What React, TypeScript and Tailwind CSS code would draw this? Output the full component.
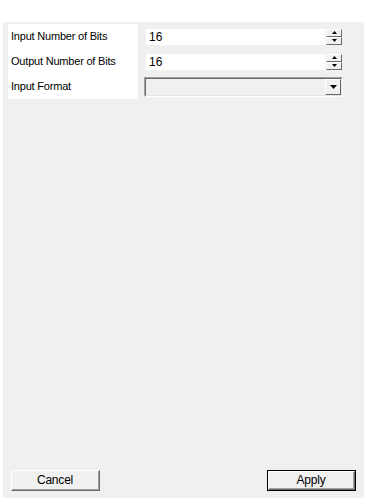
import React from "react";

const font = { fontFamily: '"Liberation Sans", Arial, sans-serif' };

function Arrow({ dir }: { dir: "up" | "down" }) {
  return (
    <svg width="5" height="3" viewBox="0 0 5 3" className="block">
      {dir === "up" ? (
        <polygon points="2.5,0 5,3 0,3" fill="#000" />
      ) : (
        <polygon points="0,0 5,0 2.5,3" fill="#000" />
      )}
    </svg>
  );
}

function SpinButton({ dir }: { dir: "up" | "down" }) {
  return (
    <div className="h-[8px] w-[16px] bg-[#f0f0f0] border-t border-l border-t-white border-l-white border-b border-r border-b-[#696969] border-r-[#696969] flex items-center justify-center">
      <Arrow dir={dir} />
    </div>
  );
}

function NumberField({ value }: { value: string }) {
  return (
    <div className="h-[25px] flex items-center">
      <div className="ml-[2px] w-[179px] h-[16px] bg-white flex items-center pl-[3px] text-[12px] text-black leading-none">
        {value}
      </div>
      <div className="ml-[1px] flex flex-col">
        <SpinButton dir="up" />
        <SpinButton dir="down" />
      </div>
    </div>
  );
}

function ComboBox() {
  return (
    <div className="h-[25px] flex items-center">
      <div className="w-[199px] h-[20px] border-t border-l border-t-[#a0a0a0] border-l-[#a0a0a0] border-b border-r border-b-white border-r-white">
        <div className="h-full w-full border-t border-l border-t-[#696969] border-l-[#696969] border-b border-r border-b-[#e3e3e3] border-r-[#e3e3e3] bg-[#f0f0f0] flex justify-end">
          <div className="w-[16px] h-full bg-[#f0f0f0] border-t border-l border-t-white border-l-white border-b border-r border-b-[#696969] border-r-[#696969] flex items-center justify-center">
            <svg width="7" height="4" viewBox="0 0 7 4" className="block">
              <polygon points="0,0 7,0 3.5,4" fill="#000" />
            </svg>
          </div>
        </div>
      </div>
    </div>
  );
}

function WinButton({ label, isDefault }: { label: string; isDefault?: boolean }) {
  const inner = (
    <div className="h-full w-full bg-[#f0f0f0] border-t border-l border-t-white border-l-white border-b border-r border-b-[#696969] border-r-[#696969]">
      <div className="h-full w-full border-b border-r border-b-[#a0a0a0] border-r-[#a0a0a0] flex items-center justify-center text-[12px] text-black tracking-[-0.2px]">
        {label}
      </div>
    </div>
  );
  return isDefault ? (
    <div className="w-[89px] h-[21px] border border-black">{inner}</div>
  ) : (
    <div className="w-[89px] h-[21px]">{inner}</div>
  );
}

export default function App() {
  const labels = ["Input Number of Bits", "Output Number of Bits", "Input Format"];
  return (
    <div className="w-[368px] h-[501px] bg-white pt-[22px] pl-[3px] pr-[4px] pb-[3px]" style={font}>
      <div className="h-full bg-[#f0f0f0] flex flex-col">
        <div className="flex pt-[2px] pl-[5px]">
          <div className="w-[130px] bg-white flex flex-col pl-[3px]">
            {labels.map((l) => (
              <div key={l} className="h-[25px] flex items-center text-[11px] text-black tracking-[-0.2px] leading-none">
                {l}
              </div>
            ))}
          </div>
          <div className="ml-[6px] flex flex-col">
            <NumberField value="16" />
            <NumberField value="16" />
            <ComboBox />
          </div>
        </div>
        <div className="flex-1" />
        <div className="flex justify-between px-[8px] pb-[7px]">
          <WinButton label="Cancel" />
          <WinButton label="Apply" isDefault />
        </div>
      </div>
    </div>
  );
}
